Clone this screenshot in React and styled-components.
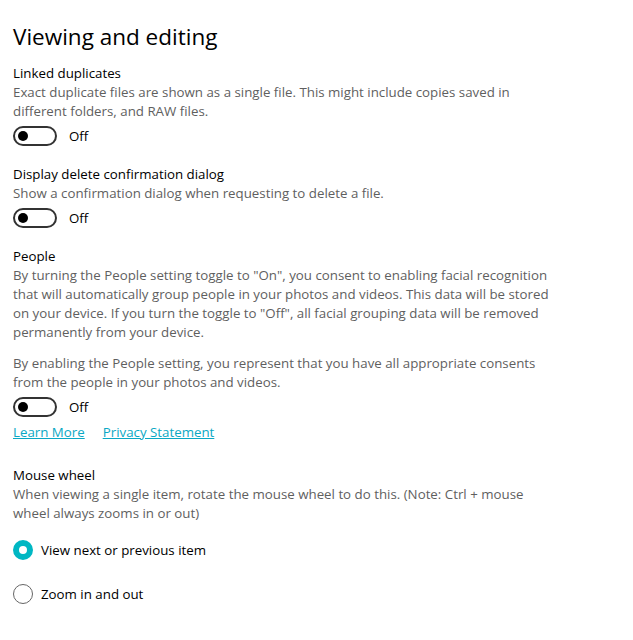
import React from "react";
import styled, { createGlobalStyle } from "styled-components";

const Global = createGlobalStyle`
  html, body { margin: 0; padding: 0; background: #fff; }
  body { font-family: "Open Sans", "Noto Sans", sans-serif; }
`;

const Page = styled.div`
  padding: 21px 13px 20px 13px;
  display: flex;
  flex-direction: column;
`;

const Title = styled.h1`
  margin: 0 0 11px 0;
  font-size: 22.5px;
  line-height: 32px;
  font-weight: 400;
  color: #000;
`;

const Section = styled.section`
  display: flex;
  flex-direction: column;
  margin-bottom: ${(p) => p.$gap ?? 19}px;
`;

const Label = styled.div`
  font-size: 13.3px;
  line-height: 19px;
  color: #000;
`;

const Desc = styled.p`
  margin: 0;
  font-size: 13.3px;
  line-height: 19px;
  color: #5f5f5f;
  white-space: nowrap;
  & + & { margin-top: 12px; }
`;

const ToggleRow = styled.div`
  display: flex;
  align-items: center;
  gap: 12px;
  margin-top: 5px;
  height: 20px;
`;

const Track = styled.div`
  box-sizing: border-box;
  width: 44px;
  height: 20px;
  border: 2px solid #333;
  border-radius: 10px;
  display: flex;
  align-items: center;
  padding-left: 3px;
`;

const Knob = styled.div`
  width: 10px;
  height: 10px;
  border-radius: 50%;
  background: #000;
`;

const ToggleText = styled.span`
  font-size: 13.3px;
  color: #000;
`;

const Links = styled.div`
  display: flex;
  gap: 18px;
  margin-top: 6px;
`;

const Link = styled.a`
  font-size: 13.3px;
  line-height: 19px;
  color: #0aa8c4;
  text-decoration: underline;
  cursor: pointer;
`;

const RadioGroup = styled.div`
  display: flex;
  flex-direction: column;
  gap: 24px;
  margin-top: 17px;
`;

const RadioRow = styled.label`
  display: flex;
  align-items: center;
  gap: 8px;
  height: 20px;
  font-size: 13.3px;
  color: #000;
`;

const RadioCircle = styled.span`
  box-sizing: border-box;
  width: 20px;
  height: 20px;
  border-radius: 50%;
  border: ${(p) => (p.$checked ? "6px solid #00b7c3" : "1px solid #666")};
  background: #fff;
`;

function Toggle() {
  return (
    <ToggleRow>
      <Track>
        <Knob />
      </Track>
      <ToggleText>Off</ToggleText>
    </ToggleRow>
  );
}

export default function App() {
  return (
    <>
      <Global />
      <Page>
        <Title>Viewing and editing</Title>
        <Section>
          <Label>Linked duplicates</Label>
          <Desc>
            Exact duplicate files are shown as a single file. This might include copies saved in
            <br />
            different folders, and RAW files.
          </Desc>
          <Toggle />
        </Section>
        <Section>
          <Label>Display delete confirmation dialog</Label>
          <Desc>Show a confirmation dialog when requesting to delete a file.</Desc>
          <Toggle />
        </Section>
        <Section $gap={24}>
          <Label>People</Label>
          <Desc>
            By turning the People setting toggle to "On", you consent to enabling facial recognition
            <br />
            that will automatically group people in your photos and videos. This data will be stored
            <br />
            on your device. If you turn the toggle to "Off", all facial grouping data will be removed
            <br />
            permanently from your device.
          </Desc>
          <Desc>
            By enabling the People setting, you represent that you have all appropriate consents
            <br />
            from the people in your photos and videos.
          </Desc>
          <Toggle />
          <Links>
            <Link>Learn More</Link>
            <Link>Privacy Statement</Link>
          </Links>
        </Section>
        <Section>
          <Label>Mouse wheel</Label>
          <Desc>
            When viewing a single item, rotate the mouse wheel to do this. (Note: Ctrl + mouse
            <br />
            wheel always zooms in or out)
          </Desc>
          <RadioGroup>
            <RadioRow>
              <RadioCircle $checked />
              View next or previous item
            </RadioRow>
            <RadioRow>
              <RadioCircle />
              Zoom in and out
            </RadioRow>
          </RadioGroup>
        </Section>
      </Page>
    </>
  );
}
